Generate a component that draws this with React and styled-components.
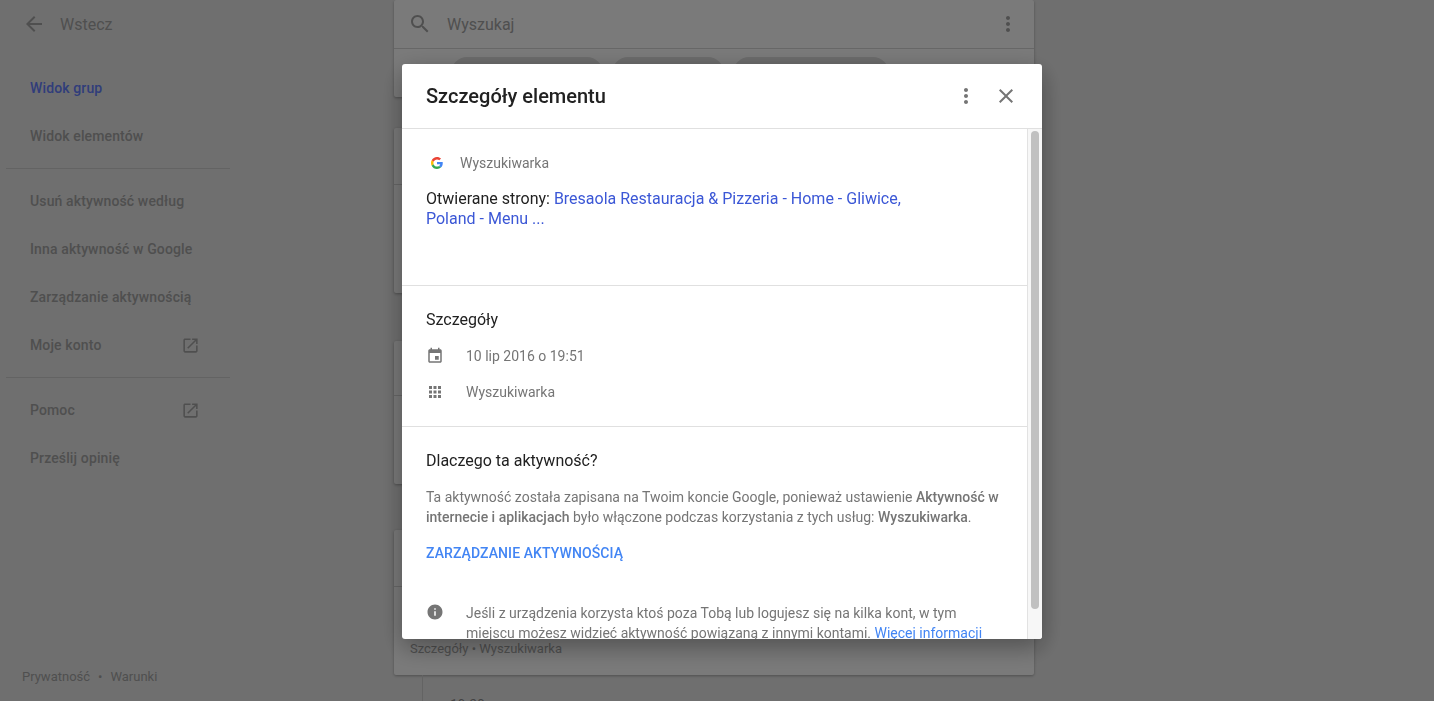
import React from "react";
import styled, { createGlobalStyle } from "styled-components";

const paths = {
	back: "M20 11H7.83l5.59-5.59L12 4l-8 8 8 8 1.41-1.41L7.83 13H20v-2z",
	search: "M15.5 14h-.79l-.28-.27C15.41 12.59 16 11.11 16 9.5 16 5.91 13.09 3 9.5 3S3 5.91 3 9.5 5.91 16 9.5 16c1.61 0 3.09-.59 4.23-1.57l.27.28v.79l5 4.99L20.49 19l-4.99-5zm-6 0C7.01 14 5 11.99 5 9.5S7.01 5 9.5 5 14 7.01 14 9.5 11.99 14 9.5 14z",
	more: "M12 8c1.1 0 2-.9 2-2s-.9-2-2-2-2 .9-2 2 .9 2 2 2zm0 2c-1.1 0-2 .9-2 2s.9 2 2 2 2-.9 2-2-.9-2-2-2zm0 6c-1.1 0-2 .9-2 2s.9 2 2 2 2-.9 2-2-.9-2-2-2z",
	close: "M19 6.41L17.59 5 12 10.59 6.41 5 5 6.41 10.59 12 5 17.59 6.41 19 12 13.41 17.59 19 19 17.59 13.41 12z",
	open: "M19 19H5V5h7V3H5c-1.11 0-2 .9-2 2v14c0 1.1.89 2 2 2h14c1.1 0 2-.9 2-2v-7h-2v7zM14 3v2h3.59l-9.83 9.83 1.41 1.41L19 6.41V10h2V3h-7z",
	event: "M17 12h-5v5h5v-5zM16 1v2H8V1H6v2H5c-1.11 0-1.99.9-1.99 2L3 19c0 1.1.89 2 2 2h14c1.1 0 2-.9 2-2V5c0-1.1-.9-2-2-2h-1V1h-2zm3 18H5V8h14v11z",
	apps: "M4 8h4V4H4v4zm6 12h4v-4h-4v4zm-6 0h4v-4H4v4zm0-6h4v-4H4v4zm6 0h4v-4h-4v4zm6-10v4h4V4h-4zm-6 4h4V4h-4v4zm6 6h4v-4h-4v4zm0 6h4v-4h-4v4z",
	info: "M12 2C6.48 2 2 6.48 2 12s4.48 10 10 10 10-4.48 10-10S17.52 2 12 2zm1 15h-2v-6h2v6zm0-8h-2V7h2v2z",
};

const Icon = ({ name, size = 24, color = "#757575" }) => (
	<IconSvg viewBox="0 0 24 24" $size={size}>
		<path d={paths[name]} fill={color} />
	</IconSvg>
);

const GoogleLogo = () => (
	<IconSvg viewBox="0 0 48 48" $size={12}>
		<path fill="#EA4335" d="M24 9.5c3.54 0 6.71 1.22 9.21 3.6l6.85-6.85C35.9 2.38 30.47 0 24 0 14.62 0 6.51 5.38 2.56 13.22l7.98 6.19C12.43 13.72 17.74 9.5 24 9.5z" />
		<path fill="#4285F4" d="M46.98 24.55c0-1.57-.15-3.09-.38-4.55H24v9.02h12.94c-.58 2.96-2.26 5.48-4.78 7.18l7.73 6c4.51-4.18 7.09-10.36 7.09-17.65z" />
		<path fill="#FBBC05" d="M10.53 28.59c-.48-1.45-.76-2.99-.76-4.59s.27-3.14.76-4.59l-7.98-6.19C.92 16.46 0 20.12 0 24c0 3.88.92 7.54 2.56 10.78l7.97-6.19z" />
		<path fill="#34A853" d="M24 48c6.48 0 11.93-2.13 15.89-5.81l-7.73-6c-2.15 1.45-4.92 2.3-8.16 2.3-6.26 0-11.57-4.22-13.47-9.91l-7.98 6.19C6.51 42.62 14.62 48 24 48z" />
	</IconSvg>
);

const App = () => {
	return (
		<>
			<GlobalStyle />
			<Page>
				<Sidebar>
					<BackRow>
						<Icon name="back" color="#a6a6a6" />
						<BackLabel>Wstecz</BackLabel>
					</BackRow>
					<NavGroup>
						<NavItem $active>Widok grup</NavItem>
						<NavItem>Widok elementów</NavItem>
					</NavGroup>
					<NavDivider />
					<NavGroup>
						<NavItem>Usuń aktywność według</NavItem>
						<NavItem>Inna aktywność w Google</NavItem>
						<NavItem>Zarządzanie aktywnością</NavItem>
						<NavItem>
							Moje konto
							<Icon name="open" size={19} color="#a6a6a6" />
						</NavItem>
					</NavGroup>
					<NavDivider />
					<NavGroup>
						<NavItem>
							Pomoc
							<Icon name="open" size={19} color="#a6a6a6" />
						</NavItem>
						<NavItem>Prześlij opinię</NavItem>
					</NavGroup>
					<SideFooter>
						Prywatność<FooterDot>•</FooterDot>Warunki
					</SideFooter>
				</Sidebar>
				<Main>
					<Card>
						<SearchRow>
							<Icon name="search" color="#a6a6a6" />
							<SearchLabel>Wyszukaj</SearchLabel>
							<Icon name="more" color="#a6a6a6" />
						</SearchRow>
						<ChipRow>
							<Chip $w={152} />
							<Chip $w={112} />
							<Chip $w={156} />
						</ChipRow>
					</Card>
					<Card $top={31}>
						<CardRow $h={56} />
						<CardRow $h={109} />
					</Card>
					<Card $top={48}>
						<CardRow $h={54} />
						<CardRow $h={89} />
					</Card>
					<Card $top={46}>
						<CardRow $h={56} />
						<CardRow $h={89}>
							<CardNote>Szczegóły • Wyszukiwarka</CardNote>
						</CardRow>
					</Card>
					<Timeline>
						<TimeLabel>19:30</TimeLabel>
					</Timeline>
				</Main>
			</Page>
			<Scrim />
			<Modal>
				<ModalHeader>
					<ModalTitle>Szczegóły elementu</ModalTitle>
					<Icon name="more" />
					<CloseBox>
						<Icon name="close" />
					</CloseBox>
				</ModalHeader>
				<ModalMain>
					<ModalBody>
						<Section $pad="24px 24px 56px">
							<SourceRow>
								<LogoBox>
									<GoogleLogo />
								</LogoBox>
								<Muted>Wyszukiwarka</Muted>
							</SourceRow>
							<Headline>
								Otwierane strony:{" "}
								<HeadlineLink>
									Bresaola Restauracja &amp; Pizzeria - Home - Gliwice, Poland - Menu ...
								</HeadlineLink>
							</Headline>
						</Section>
						<Section $pad="22px 24px 16px">
							<SectionTitle>Szczegóły</SectionTitle>
							<DetailList>
								<DetailRow>
									<DetailIcon>
										<Icon name="event" size={18} />
									</DetailIcon>
									<Muted>10 lip 2016 o 19:51</Muted>
								</DetailRow>
								<DetailRow>
									<DetailIcon>
										<Icon name="apps" size={18} />
									</DetailIcon>
									<Muted>Wyszukiwarka</Muted>
								</DetailRow>
							</DetailList>
						</Section>
						<Section $pad="22px 24px 30px" $last>
							<SectionTitle>Dlaczego ta aktywność?</SectionTitle>
							<Paragraph>
								Ta aktywność została zapisana na Twoim koncie Google, ponieważ ustawienie{" "}
								<b>Aktywność w internecie i aplikacjach</b> było włączone podczas korzystania z tych usług:{" "}
								<b>Wyszukiwarka</b>.
							</Paragraph>
							<ActionLink>ZARZĄDZANIE AKTYWNOŚCIĄ</ActionLink>
							<InfoRow>
								<DetailIcon>
									<Icon name="info" size={18} />
								</DetailIcon>
								<InfoText>
									Jeśli z urządzenia korzysta ktoś poza Tobą lub logujesz się na kilka kont, w tym miejscu możesz
									widzieć aktywność powiązaną z innymi kontami. <InlineLink>Więcej informacji</InlineLink>
								</InfoText>
							</InfoRow>
						</Section>
					</ModalBody>
					<ScrollTrack>
						<ScrollThumb />
					</ScrollTrack>
				</ModalMain>
			</Modal>
		</>
	);
};

export default App;

const GlobalStyle = createGlobalStyle`
	html, body {
		margin: 0;
		height: 100%;
		overflow: hidden;
	}
	body {
		background: #e9e9e9;
		font-family: Roboto, "Liberation Sans", sans-serif;
		color: #212121;
	}
	* {
		box-sizing: border-box;
	}
`;
const IconSvg = styled.svg`
	width: ${(p) => p.$size}px;
	height: ${(p) => p.$size}px;
	flex: none;
	display: block;
`;
const Page = styled.div`
	display: flex;
	height: 701px;
	overflow: hidden;
`;
// Left navigation
const Sidebar = styled.aside`
	width: 394px;
	flex: none;
	display: flex;
	flex-direction: column;
`;
const BackRow = styled.div`
	height: 64px;
	padding: 12px 0 28px 22px;
	display: flex;
	align-items: center;
	gap: 14px;
`;
const BackLabel = styled.span`
	font-size: 16px;
	color: #a6a6a6;
`;
const NavGroup = styled.div`
	display: flex;
	flex-direction: column;
`;
const NavItem = styled.div`
	width: 230px;
	height: 48px;
	padding: 0 30px;
	display: flex;
	align-items: center;
	justify-content: space-between;
	font-size: 14px;
	font-weight: 500;
	letter-spacing: 0.13px;
	color: ${(p) => (p.$active ? "#6580ff" : "#a6a6a6")};
`;
const NavDivider = styled.div`
	width: 224px;
	height: 1px;
	margin: 8px 0 8px 6px;
	background: #cfcfcf;
`;
const SideFooter = styled.div`
	margin-top: auto;
	padding: 0 0 15px 22px;
	line-height: 18px;
	font-size: 13px;
	color: #a6a6a6;
`;
const FooterDot = styled.span`
	margin: 0 8px;
`;
// Activity list behind the dialog
const Main = styled.main`
	width: 640px;
	flex: none;
	display: flex;
	flex-direction: column;
`;
const Card = styled.section`
	flex: none;
	margin-top: ${(p) => p.$top || 0}px;
	background: #fff;
	border-radius: 2px;
	box-shadow: 0 1px 3px rgba(0, 0, 0, 0.3);
`;
const SearchRow = styled.div`
	height: 49px;
	padding: 0 14px;
	display: flex;
	align-items: center;
	gap: 15px;
	border-bottom: 1px solid #d8d8d8;
`;
const SearchLabel = styled.span`
	flex: 1;
	font-size: 16px;
	color: #a6a6a6;
`;
const ChipRow = styled.div`
	height: 48px;
	padding: 8px 0 0 57px;
	display: flex;
	gap: 9px;
`;
const Chip = styled.div`
	width: ${(p) => p.$w}px;
	height: 32px;
	border-radius: 16px;
	background: #e0e0e0;
`;
const CardRow = styled.div`
	height: ${(p) => p.$h}px;
	padding: 0 16px 17px;
	display: flex;
	align-items: flex-end;
	& + & {
		border-top: 1px solid #d8d8d8;
	}
`;
const CardNote = styled.span`
	font-size: 13px;
	line-height: 18px;
	color: #a6a6a6;
`;
const Timeline = styled.div`
	margin-left: 28px;
	flex: 1;
	padding: 20px 0 0 27px;
	border-left: 1px solid #cfcfcf;
`;
const TimeLabel = styled.span`
	font-size: 14px;
	color: #8a8a8a;
`;
// Dialog
const Scrim = styled.div`
	position: fixed;
	inset: 0;
	background: rgba(0, 0, 0, 0.52);
`;
const Modal = styled.div`
	position: fixed;
	top: 64px;
	left: 402px;
	width: 640px;
	height: 575px;
	display: flex;
	flex-direction: column;
	background: #fff;
	border-radius: 3px;
	overflow: hidden;
	box-shadow: 0 8px 24px rgba(0, 0, 0, 0.35);
`;
const ModalHeader = styled.header`
	height: 65px;
	flex: none;
	padding: 0 24px;
	display: flex;
	align-items: center;
	border-bottom: 1px solid #e0e0e0;
`;
const ModalTitle = styled.h1`
	flex: 1;
	margin: 0;
	font-size: 20px;
	font-weight: 500;
	color: #212121;
`;
const CloseBox = styled.div`
	margin-left: 16px;
`;
const ModalMain = styled.div`
	flex: 1;
	min-height: 0;
	display: flex;
`;
const ModalBody = styled.div`
	flex: 1;
	min-width: 0;
	overflow: hidden;
	border-right: 1px solid #e2e2e2;
`;
const ScrollTrack = styled.div`
	width: 14px;
	flex: none;
	padding: 2px 3px 0;
	background: #f7f7f7;
`;
const ScrollThumb = styled.div`
	height: 478px;
	border-radius: 4px;
	background: #c1c1c1;
`;
const Section = styled.div`
	padding: ${(p) => p.$pad};
	border-bottom: ${(p) => (p.$last ? "none" : "1px solid #e0e0e0")};
`;
const SourceRow = styled.div`
	display: flex;
	align-items: center;
	height: 20px;
	margin-bottom: 16px;
`;
const LogoBox = styled.div`
	width: 34px;
	padding-left: 5px;
`;
const Muted = styled.span`
	font-size: 14px;
	line-height: 20px;
	color: #757575;
`;
const Headline = styled.div`
	max-width: 500px;
	font-size: 16px;
	line-height: 20px;
	color: #212121;
`;
const HeadlineLink = styled.span`
	color: #3b57d6;
`;
const SectionTitle = styled.h2`
	margin: 0;
	font-size: 16px;
	font-weight: 400;
	line-height: 24px;
	color: #212121;
`;
const DetailList = styled.div`
	margin-top: 6px;
`;
const DetailRow = styled.div`
	height: 36px;
	display: flex;
	align-items: center;
`;
const DetailIcon = styled.div`
	width: 40px;
	flex: none;
`;
const Paragraph = styled.p`
	margin: 14px 0 16px;
	font-size: 14px;
	line-height: 20px;
	color: #757575;
	b {
		font-weight: 500;
	}
`;
const ActionLink = styled.div`
	font-size: 14px;
	font-weight: 500;
	line-height: 20px;
	letter-spacing: 0.1px;
	color: #4285f4;
`;
const InfoRow = styled.div`
	display: flex;
	margin-top: 40px;
`;
const InfoText = styled.div`
	font-size: 14px;
	line-height: 20px;
	color: #757575;
`;
const InlineLink = styled.span`
	color: #4285f4;
`;
